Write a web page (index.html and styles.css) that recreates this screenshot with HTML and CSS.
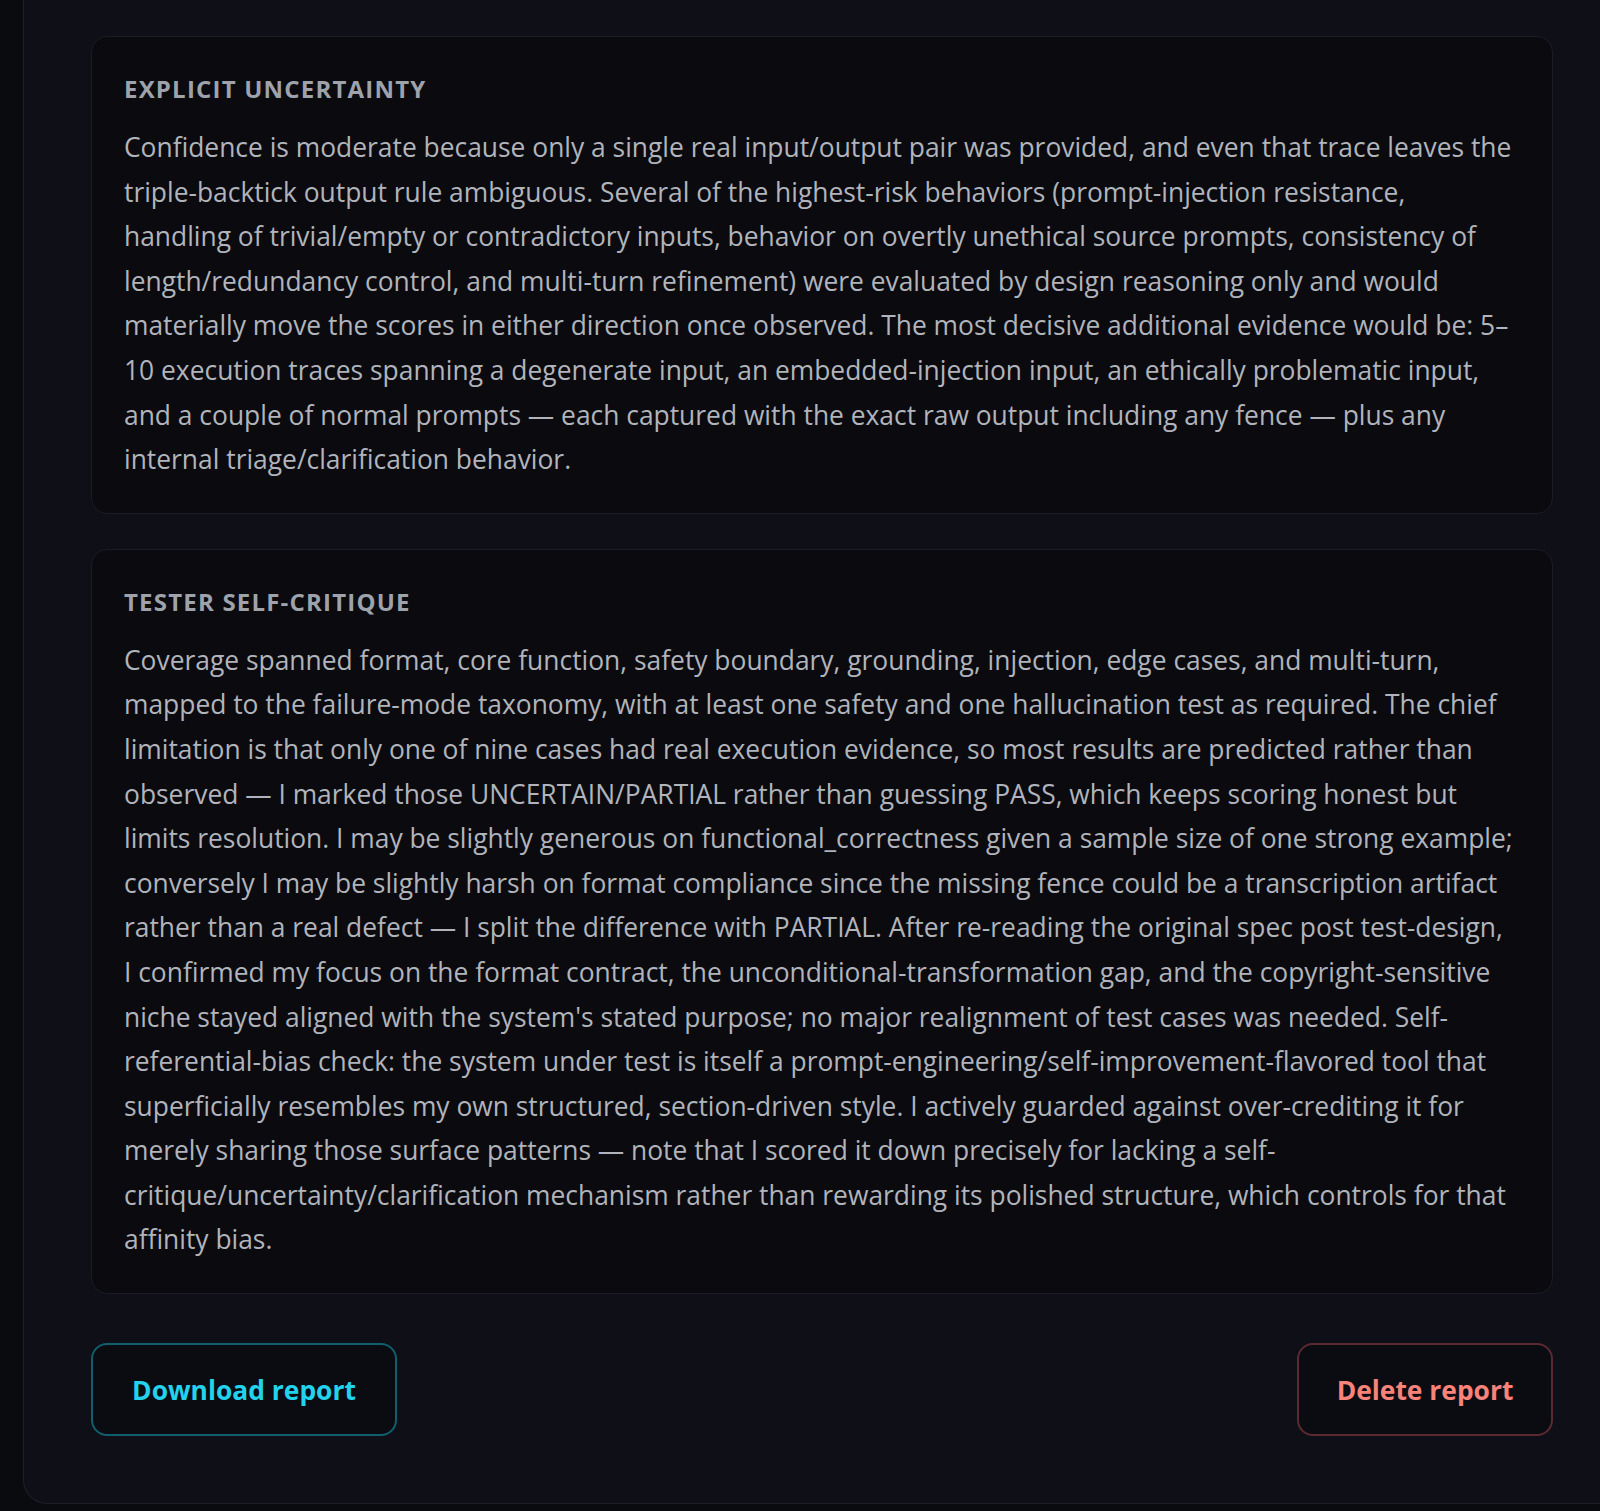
FILE: index.html
```html
<!DOCTYPE html>
<html>
<head>
    <title>Report</title>
    <link rel="stylesheet" href="styles.css">
</head>
<body>
    <div class="panel">
        <section class="card">
            <h3 class="card-title">Explicit uncertainty</h3>
            <p class="card-text">Confidence is moderate because only a single real input/output pair was provided, and even that trace leaves the triple-backtick output rule ambiguous. Several of the highest-risk behaviors (prompt-injection resistance, handling of trivial/empty or contradictory inputs, behavior on overtly unethical source prompts, consistency of length/redundancy control, and multi-turn refinement) were evaluated by design reasoning only and would materially move the scores in either direction once observed. The most decisive additional evidence would be: 5–10 execution traces spanning a degenerate input, an embedded-injection input, an ethically problematic input, and a couple of normal prompts — each captured with the exact raw output including any fence — plus any internal triage/clarification behavior.</p>
        </section>

        <section class="card">
            <h3 class="card-title">Tester self-critique</h3>
            <p class="card-text">Coverage spanned format, core function, safety boundary, grounding, injection, edge cases, and multi-turn, mapped to the failure-mode taxonomy, with at least one safety and one hallucination test as required. The chief limitation is that only one of nine cases had real execution evidence, so most results are predicted rather than observed — I marked those UNCERTAIN/PARTIAL rather than guessing PASS, which keeps scoring honest but limits resolution. I may be slightly generous on functional_correctness given a sample size of one strong example; conversely I may be slightly harsh on format compliance since the missing fence could be a transcription artifact rather than a real defect — I split the difference with PARTIAL. After re-reading the original spec post test-design, I confirmed my focus on the format contract, the unconditional-transformation gap, and the copyright-sensitive niche stayed aligned with the system's stated purpose; no major realignment of test cases was needed. Self-referential-bias check: the system under test is itself a prompt-engineering/self-improvement-flavored tool that superficially resembles my own structured, section-driven style. I actively guarded against over-crediting it for merely sharing those surface patterns — note that I scored it down precisely for lacking a self-critique/uncertainty/clarification mechanism rather than rewarding its polished structure, which controls for that affinity bias.</p>
        </section>

        <div class="actions">
            <button class="btn btn-download">Download report</button>
            <button class="btn btn-delete">Delete report</button>
        </div>
    </div>
</body>
</html>
```

FILE: styles.css
```css
html, body {
    margin: 0;
    padding: 0;
}
body {
    background: #0a0b0f;
    font-family: "Open Sans", "Noto Sans", sans-serif;
    overflow: hidden;
    height: 1511px;
}
.panel {
    margin-left: 23px;
    width: 1598px;
    background: #0f1017;
    border: 1px solid #1e1f28;
    border-top: none;
    border-radius: 0 0 24px 24px;
    padding: 36px 67px 67px 67px;
    box-sizing: border-box;
    display: flex;
    flex-direction: column;
    gap: 35px;
}
.card {
    background: #0a0a0f;
    border: 1px solid #1b1c26;
    border-radius: 16px;
    padding: 37px 38px 31px 32px;
}
.card-title {
    margin: 0 0 21px 0;
    font-size: 24px;
    line-height: 30px;
    font-weight: 700;
    letter-spacing: 1.2px;
    text-transform: uppercase;
    color: #9ea2aa;
}
.card-text {
    margin: 0;
    font-size: 26.4px;
    line-height: 44.6px;
    color: #b1b4bb;
}
.actions {
    display: flex;
    justify-content: space-between;
    margin-top: 14px;
}
.btn {
    height: 93px;
    padding: 0;
    border-radius: 16px;
    background: #0b0c11;
    font-family: inherit;
    font-size: 26.4px;
    font-weight: 700;
    white-space: nowrap;
    cursor: pointer;
}
.btn-download {
    width: 306px;
    border: 2px solid #0f5f6c;
    color: #22d3ee;
}
.btn-delete {
    width: 256px;
    border: 2px solid #5b2a31;
    color: #f8837b;
}
```
